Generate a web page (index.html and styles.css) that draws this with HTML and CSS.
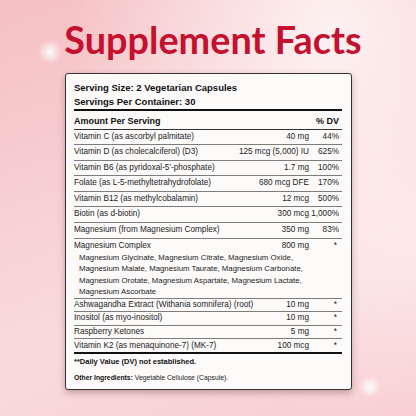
FILE: index.html
```html
<!DOCTYPE html>
<html lang="en">
  <head>
    <meta charset="UTF-8" />
    <meta name="viewport" content="width=device-width, initial-scale=1.0" />
    <title>Supplement Facts</title>
    <link rel="stylesheet" href="styles.css">
  </head>
  <body>
    <main class="page">
      <h1 class="title">Supplement Facts</h1>

      <section class="facts">
        <div class="serving">
          <p>Serving Size: 2 Vegetarian Capsules</p>
          <p>Servings Per Container: 30</p>
        </div>

        <div class="facts-head">
          <span>Amount Per Serving</span>
          <span>% DV</span>
        </div>

        <div class="row">
          <span class="name">Vitamin C (as ascorbyl palmitate)</span>
          <span class="amt">40 mg</span>
          <span class="dv">44%</span>
        </div>
        <div class="row">
          <span class="name">Vitamin D (as cholecalciferol) (D3)</span>
          <span class="amt">125 mcg (5,000) IU</span>
          <span class="dv">625%</span>
        </div>
        <div class="row">
          <span class="name">Vitamin B6 (as pyridoxal-5'-phosphate)</span>
          <span class="amt">1.7 mg</span>
          <span class="dv">100%</span>
        </div>
        <div class="row">
          <span class="name">Folate (as L-5-methyltetrahydrofolate)</span>
          <span class="amt">680 mcg DFE</span>
          <span class="dv">170%</span>
        </div>
        <div class="row">
          <span class="name">Vitamin B12 (as methylcobalamin)</span>
          <span class="amt">12 mcg</span>
          <span class="dv">500%</span>
        </div>
        <div class="row">
          <span class="name">Biotin (as d-biotin)</span>
          <span class="amt">300 mcg</span>
          <span class="dv">1,000%</span>
        </div>
        <div class="row">
          <span class="name">Magnesium (from Magnesium Complex)</span>
          <span class="amt">350 mg</span>
          <span class="dv">83%</span>
        </div>

        <div class="row row-complex">
          <span class="name">Magnesium Complex</span>
          <span class="amt">800 mg</span>
          <span class="dv star">*</span>
          <ul class="sub">
            <li>Magnesium Glycinate, Magnesium Citrate, Magnesium Oxide,</li>
            <li>Magnesium Malate, Magnesium Taurate, Magnesium Carbonate,</li>
            <li>Magnesium Orotate, Magnesium Aspartate, Magnesium Lactate,</li>
            <li>Magnesium Ascorbate</li>
          </ul>
        </div>

        <div class="row row-small">
          <span class="name">Ashwagandha Extract (Withania somnifera) (root)</span>
          <span class="amt">10 mg</span>
          <span class="dv star">*</span>
        </div>
        <div class="row row-small">
          <span class="name">Inositol (as myo-inositol)</span>
          <span class="amt">10 mg</span>
          <span class="dv star">*</span>
        </div>
        <div class="row row-small">
          <span class="name">Raspberry Ketones</span>
          <span class="amt">5 mg</span>
          <span class="dv star">*</span>
        </div>
        <div class="row row-small row-last">
          <span class="name">Vitamin K2 (as menaquinone-7) (MK-7)</span>
          <span class="amt">100 mcg</span>
          <span class="dv star">*</span>
        </div>

        <p class="note">**Daily Value (DV) not established.</p>
        <p class="other"><b>Other Ingredients:</b> Vegetable Cellulose (Capsule).</p>
      </section>
    </main>
  </body>
</html>
```

FILE: styles.css
```css
:root {
  --crimson: #c5102f;
  --ink: #111111;
  --text: #222222;
  --rule: #7d7d7d;
  --panel: #fdfafa;
}

* {
  margin: 0;
  padding: 0;
  box-sizing: border-box;
}

body {
  width: 416px;
  height: 416px;
  overflow: hidden;
  font-family: "Liberation Sans", Arial, sans-serif;
  color: var(--text);
  background:
    radial-gradient(circle at 50px 52px, rgba(255, 255, 255, 0.95) 0, rgba(255, 255, 255, 0) 12px),
    radial-gradient(circle at 370px 387px, rgba(255, 255, 255, 0.95) 0, rgba(255, 255, 255, 0) 11px),
    radial-gradient(ellipse at 80% 8%, #fdf1f1 0%, rgba(253, 241, 241, 0) 55%),
    radial-gradient(ellipse at 100% 60%, #fce6e6 0%, rgba(252, 230, 230, 0) 50%),
    linear-gradient(160deg, #f5c0c3 0%, #f8d1d3 40%, #f9dbdc 65%, #f8cdd0 100%);
}

.page {
  padding-top: 21px;
}

.title {
  padding-left: 10px;
  font-family: Lato, "Liberation Sans", sans-serif;
  font-weight: 700;
  font-size: 37.8px;
  line-height: 37px;
  color: var(--crimson);
  text-align: center;
}

.facts {
  width: 287px;
  margin: 15px auto 0;
  padding: 7px 8.5px 4.5px;
  background-color: var(--panel);
  border: 1.5px solid #333;
  border-radius: 3px;
  box-shadow: 0 3px 7px rgba(80, 20, 30, 0.3);
}

.serving {
  font-weight: 700;
  font-size: 9.5px;
  line-height: 13.5px;
  color: var(--ink);
  padding-bottom: 1px;
}

.facts-head {
  display: flex;
  justify-content: space-between;
  border-top: 2.5px solid var(--ink);
  border-bottom: 1.5px solid #333;
  padding: 3px 3px 0 0;
  font-weight: 700;
  font-size: 9px;
  line-height: 14.5px;
  color: var(--ink);
}

.row {
  display: grid;
  grid-template-columns: 1fr auto 30px;
  padding-right: 3px;
  border-bottom: 1px solid var(--rule);
  font-size: 8.2px;
  line-height: 14.6px;
}

.amt,
.dv {
  text-align: right;
}

.star {
  padding-right: 2px;
}

.row-complex {
  line-height: 13px;
}

.sub {
  grid-column: 1 / -1;
  list-style: none;
  padding-left: 5px;
  font-size: 7.8px;
  line-height: 11.6px;
}

.row-small {
  line-height: 12.3px;
}

.row-last {
  line-height: 13.5px;
  border-bottom: 2.5px solid var(--ink);
}

.note {
  margin-top: 2px;
  font-weight: 700;
  font-size: 7.5px;
  line-height: 12px;
  color: var(--ink);
}

.other {
  margin-top: 4px;
  font-size: 6.8px;
  line-height: 12px;
}

.other b {
  color: var(--ink);
}
```
